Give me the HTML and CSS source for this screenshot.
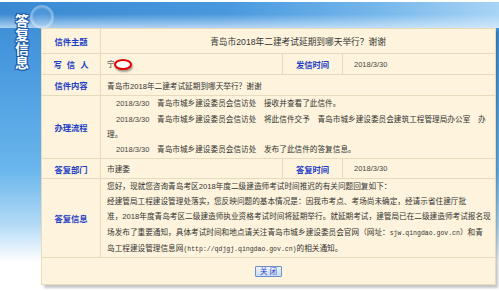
FILE: index.html
```html
<!DOCTYPE html>
<html lang="zh-CN">
<head>
  <meta charset="UTF-8">
  <title>答复信息</title>
  <link rel="stylesheet" href="styles.css">
</head>
<body>
  <div class="page">
    <div class="side">
      <div class="side-title">答复信息</div>
    </div>

    <div class="panel">
      <table class="letter">
        <colgroup>
          <col class="c-label">
          <col class="c-wide">
          <col class="c-label2">
          <col class="c-rest">
        </colgroup>
        <tr class="r-subject">
          <th>信件主题</th>
          <td colspan="3" class="subject">青岛市2018年二建考试延期到哪天举行？谢谢</td>
        </tr>
        <tr class="r-sender">
          <th class="spaced">写信人</th>
          <td class="indent">宁<span class="mask"></span></td>
          <th>发信时间</th>
          <td class="date">2018/3/30</td>
        </tr>
        <tr class="r-content">
          <th>信件内容</th>
          <td colspan="3">青岛市2018年二建考试延期到哪天举行？谢谢</td>
        </tr>
        <tr class="r-flow">
          <th>办理流程</th>
          <td colspan="3" class="indent flow">
            <div class="step"><span class="date">2018/3/30</span>　青岛市城乡建设委员会信访处　接收并查看了此信件。</div>
            <div class="step"><span class="date">2018/3/30</span>　青岛市城乡建设委员会信访处　将此信件交予　青岛市城乡建设委员会建筑工程管理局办公室　办<br>理。</div>
            <div class="step"><span class="date">2018/3/30</span>　青岛市城乡建设委员会信访处　发布了此信件的答复信息。</div>
          </td>
        </tr>
        <tr class="r-dept">
          <th>答复部门</th>
          <td class="indent">市建委</td>
          <th>答复时间</th>
          <td class="date">2018/3/30</td>
        </tr>
        <tr class="r-reply">
          <th>答复信息</th>
          <td colspan="3" class="reply">您好，现就您咨询青岛考区2018年度二级建造师考试时间推迟的有关问题回复如下：<br>经建管局工程建设管理处落实，您反映问题的基本情况是：因我市考点、考场尚未确定，经请示省住建厅批<br>准，2018年度青岛考区二级建造师执业资格考试时间将延期举行。就延期考试，建管局已在二级建造师考试报名现<br>场发布了重要通知，具体考试时间和地点请关注青岛市城乡建设委员会官网（网址：<span class="url">sjw.qingdao.gov.cn</span>）和青<br>岛工程建设管理信息网<span class="url">(http://qdjgj.qingdao.gov.cn)</span>的相关通知。</td>
        </tr>
        <tr class="r-actions">
          <td colspan="4" class="actions"><button class="close-btn">关 闭</button></td>
        </tr>
      </table>
    </div>
  </div>
</body>
</html>
```

FILE: styles.css
```css
body {
  margin: 0;
  height: 291px;
  overflow: hidden;
  font-family: "Liberation Sans", "Noto Sans CJK SC", sans-serif;
  color: #333;
  background:
    radial-gradient(circle at 42px 17px, rgba(255,255,255,0.12) 0, rgba(255,255,255,0.08) 8px, rgba(255,255,255,0.4) 11px, rgba(255,255,255,0) 12.5px),
    linear-gradient(to bottom, rgba(255,255,255,0) 0, rgba(255,255,255,0) 14px, rgba(225,240,252,0.7) 28px) 0 0 / 100% 28px no-repeat,
    linear-gradient(to right, #3a8ad3 0, #4898de 45%, #74b6ea 75%, #a8d4f5 100%) 0 2px / 100% 26px no-repeat,
    linear-gradient(to bottom, #fff 0, #fff 2px, #3a8ad3 3px, #4a9be0 70px, #6ab6ec 170px, #b4dbf6 225px, #fff 262px);
}

.page {
  display: flex;
  align-items: flex-start;
}

.side {
  width: 41px;
  flex-shrink: 0;
  padding: 14px 0 0 15px;
  box-sizing: border-box;
}

.side-title {
  width: 15px;
  font-size: 14px;
  line-height: 14px;
  font-weight: bold;
  color: #fff;
  word-break: break-all;
  text-shadow:
    1px 0 0 #1d5aa8, -1px 0 0 #1d5aa8, 0 1px 0 #1d5aa8, 0 -1px 0 #1d5aa8,
    1px 1px 0 #1d5aa8, -1px -1px 0 #1d5aa8, 1px -1px 0 #1d5aa8, -1px 1px 0 #1d5aa8;
}

.panel {
  margin-top: 28px;
  width: 454px;
  background-color: #fef3dc;
  box-shadow: 3px 3px 2px rgba(0,0,0,0.22);
}

.letter {
  width: 454px;
  table-layout: fixed;
  border-collapse: collapse;
  font-size: 7.65px;
}

.c-label { width: 59px; }
.c-wide { width: 182px; }
.c-label2 { width: 60px; }
.c-rest { width: 153px; }

.letter th,
.letter td {
  border: 1px solid #e8dbbd;
  padding: 0 6px;
  vertical-align: middle;
}

.letter th {
  color: #1d3fc6;
  font-size: 8.3px;
  font-weight: bold;
  text-align: center;
  padding: 0;
}

.letter th.spaced {
  letter-spacing: 5px;
  padding-left: 5px;
}

.r-subject { height: 25px; }
.r-sender { height: 21px; }
.r-content { height: 21px; }
.r-flow { height: 63px; }
.r-dept { height: 20px; }
.r-reply { height: 79px; }
.r-actions { height: 27px; }

.subject {
  text-align: center;
  font-size: 8.7px;
}

.indent {
  padding-left: 11px;
}

.date {
  font-size: 7.5px;
  color: #444;
}

td.date {
  padding-left: 11px;
}

.mask {
  display: inline-block;
  vertical-align: middle;
  width: 14px;
  height: 7px;
  margin-left: -1px;
  background: #fff;
  border: 2.5px solid #e20000;
  border-radius: 50%;
  box-shadow: 1px 2px 2px rgba(0,0,0,0.35);
}

.flow {
  line-height: 15.3px;
}

.step {
  text-indent: 9px;
  white-space: nowrap;
}

.reply {
  line-height: 15.2px;
  white-space: nowrap;
  padding-top: 1px;
}

.url {
  font-family: "Liberation Mono", monospace;
  font-size: 6.5px;
}

.actions {
  text-align: center;
  padding-left: 28px;
}

.close-btn {
  font-family: "Liberation Sans", "Noto Sans CJK SC", sans-serif;
  font-size: 7.5px;
  line-height: 9px;
  color: #1d3fc6;
  padding: 0 4px;
  background: linear-gradient(to bottom, #eef4fd, #c9dbf5);
  border: 1px solid #6f8fc7;
  border-radius: 1px;
}
```
